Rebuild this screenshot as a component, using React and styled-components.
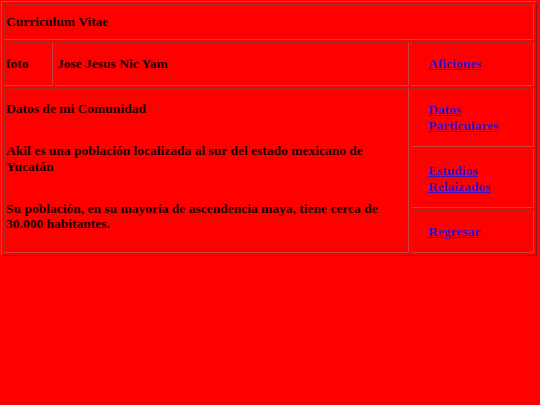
import React from 'react';
import styled, { createGlobalStyle } from 'styled-components';

const Global = createGlobalStyle`
  html, body { background: #ff0000; }
  body {
    margin: 1px;
    font-family: "Liberation Serif", "Times New Roman", serif;
    font-size: 13.5px;
    color: #1a0000;
  }
`;

const Table = styled.table`
  width: 536px;
  border: 1px solid;
  border-color: #d24646 #8e1818 #8e1818 #d24646;
  border-spacing: 2px;
  border-collapse: separate;
`;

const Row = styled.tr`
  height: ${(p) => p.$h}px;
`;

const Cell = styled.td`
  box-sizing: border-box;
  width: ${(p) => (p.$w ? `${p.$w}px` : 'auto')};
  border: 1px solid;
  border-color: #b52626 #cf4040 #cf4040 #b52626;
  padding: 1px;
  vertical-align: ${(p) => (p.$top ? 'top' : 'middle')};
  font-weight: bold;
  line-height: 15.5px;
`;

const LinkCell = styled(Cell)`
  padding: 1px 6px 1px 16px;
`;

const NavLink = styled.a`
  color: #3a12c4;
  text-decoration: underline;
  font-weight: bold;
`;

const Para = styled.p`
  margin: 26.5px 0 0;
  &:first-child {
    margin-top: 11px;
  }
`;

export default function App() {
  return (
    <>
      <Global />
      <Table>
        <tbody>
          <Row $h={36}>
            <Cell colSpan={3}>Curriculum Vitae</Cell>
          </Row>
          <Row $h={44}>
            <Cell $w={49}>foto</Cell>
            <Cell>Jose Jesus Nic Yam</Cell>
            <LinkCell $w={123}>
              <NavLink href="#">Aficiones</NavLink>
            </LinkCell>
          </Row>
          <Row $h={59}>
            <Cell colSpan={2} rowSpan={3} $top>
              <Para>Datos de mi Comunidad</Para>
              <Para>Akil es una población localizada al sur del estado mexicano de Yucatán</Para>
              <Para>Su población, en su mayoría de ascendencia maya, tiene cerca de 30.000 habitantes.</Para>
            </Cell>
            <LinkCell>
              <NavLink href="#">Datos Particulares</NavLink>
            </LinkCell>
          </Row>
          <Row $h={59}>
            <LinkCell>
              <NavLink href="#">Estudios Relaizados</NavLink>
            </LinkCell>
          </Row>
          <Row $h={43}>
            <LinkCell>
              <NavLink href="#">Regresar</NavLink>
            </LinkCell>
          </Row>
        </tbody>
      </Table>
    </>
  );
}
